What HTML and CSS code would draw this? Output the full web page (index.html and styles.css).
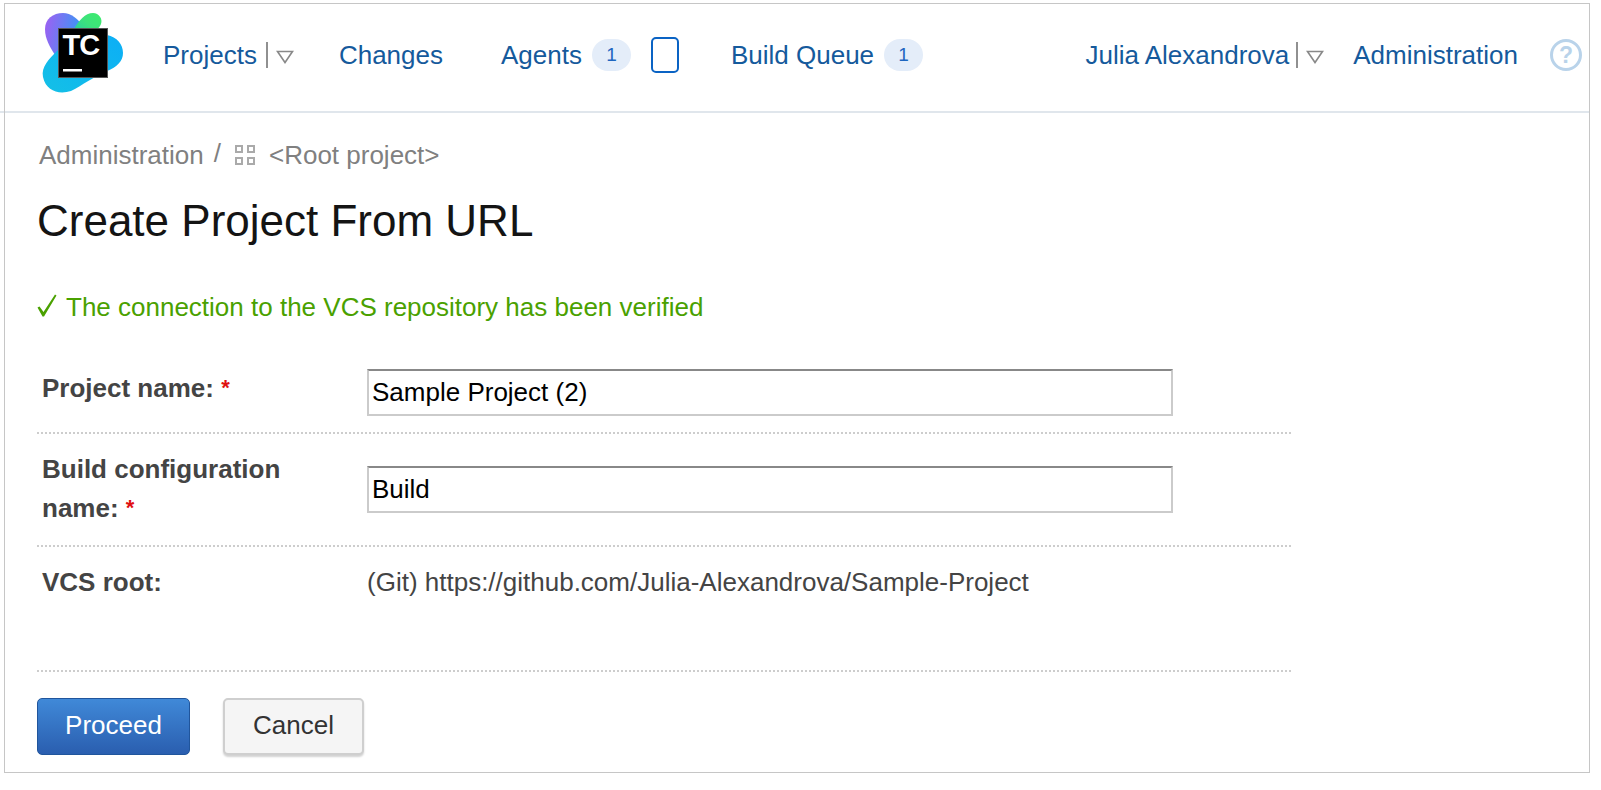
FILE: index.html
```html
<!DOCTYPE html>
<html lang="en">
<head>
<meta charset="utf-8">
<title>Create Project From URL</title>
<link rel="stylesheet" href="styles.css">
</head>
<body>
<div class="frame">
  <header class="topbar">
    <svg class="logo" viewBox="0 0 84 84" width="84" height="84" aria-hidden="true">
      <defs>
        <linearGradient id="gp" x1="0" y1="0.3" x2="1" y2="0.5"><stop offset="0" stop-color="#9a62f2"/><stop offset="1" stop-color="#2f9cf4"/></linearGradient>
        <linearGradient id="gg" x1="0" y1="1" x2="1" y2="0"><stop offset="0" stop-color="#1fc0b8"/><stop offset="0.6" stop-color="#3de27c"/><stop offset="1" stop-color="#3dec6c"/></linearGradient>
        <linearGradient id="gc" x1="0" y1="1" x2="1" y2="0"><stop offset="0" stop-color="#14c0e6"/><stop offset="1" stop-color="#0caef6"/></linearGradient>
      </defs>
      <path fill="url(#gp)" d="M4 18C4 8 12 2 22 2C30 2 37 8 43 16L30 40L14 44C9 36 4 28 4 18Z"/>
      <path fill="url(#gc)" d="M66 24C76 26 82 33 82 42C82 50 76 56 66 60C52 66 42 74 30 80C18 84 5 80 2 66C0 56 8 48 16 40C30 28 52 22 66 24Z"/>
      <path fill="url(#gg)" d="M34 16C38 10 44 2 52 2C58 2 62 8 60 13C58 18 54 20 50 24L30 30Z"/>
      <rect x="17.5" y="17.5" width="49" height="49" fill="#000" stroke="#555" stroke-width="1"/>
      <text class="logo-text" x="21.5" y="44">TC</text>
      <rect x="22" y="58" width="19" height="2.5" fill="#fff"/>
    </svg>
    <nav class="nav">
      <a class="nav-link nav-projects">Projects</a>
      <span class="pipe"></span>
      <svg class="caret" viewBox="0 0 18 14" width="18" height="14" aria-hidden="true"><path d="M1.5 1.5H16.5L9 12.5Z" fill="none" stroke="#888" stroke-width="1.6"/></svg>
      <a class="nav-link nav-changes">Changes</a>
      <a class="nav-link nav-agents">Agents</a>
      <span class="badge">1</span>
      <span class="box"></span>
      <a class="nav-link nav-queue">Build Queue</a>
      <span class="badge">1</span>
    </nav>
    <nav class="nav nav-right">
      <a class="nav-link">Julia Alexandrova</a>
      <span class="pipe pipe-user"></span>
      <svg class="caret" viewBox="0 0 18 14" width="18" height="14" aria-hidden="true"><path d="M1.5 1.5H16.5L9 12.5Z" fill="none" stroke="#888" stroke-width="1.6"/></svg>
      <a class="nav-link nav-admin">Administration</a>
      <span class="help">?</span>
    </nav>
  </header>
  <main class="content">
    <div class="crumbs">
      <span>Administration</span>
      <span class="slash">/</span>
      <svg class="grid-icon" viewBox="0 0 20 20" width="20" height="20" aria-hidden="true"><g fill="none" stroke="#aaa" stroke-width="2"><rect x="1" y="1" width="6" height="6"/><rect x="13" y="1" width="6" height="6"/><rect x="1" y="13" width="6" height="6"/><rect x="13" y="13" width="6" height="6"/></g></svg>
      <span>&lt;Root project&gt;</span>
    </div>
    <h1 class="title">Create Project From URL</h1>
    <p class="success"><svg class="check" viewBox="0 0 20 23" width="20" height="23" aria-hidden="true"><path d="M0.5 13.5L2.5 12.5L6.5 18L18 0.5L19.5 1.5L7 22.5H5.5Z" fill="#4aa100"/></svg><span>The connection to the VCS repository has been verified</span></p>
    <div class="form">
      <div class="row row-name">
        <div class="label">Project name: <span class="req">*</span></div>
        <div class="input">Sample Project (2)</div>
      </div>
      <div class="row row-build">
        <div class="label">Build configuration <span class="label-end">name: <span class="req">*</span></span></div>
        <div class="input">Build</div>
      </div>
      <div class="row row-vcs">
        <div class="label">VCS root:</div>
        <div class="value">(Git) https://github.com/Julia-Alexandrova/Sample-Project</div>
      </div>
    </div>
    <div class="actions">
      <button class="btn btn-primary">Proceed</button>
      <button class="btn btn-default">Cancel</button>
    </div>
  </main>
</div>
</body>
</html>
```
FILE: styles.css
```css
html, body { margin: 0; padding: 0; background: #fff; }
body { font-family: "Liberation Sans", Arial, sans-serif; font-size: 26px; color: #333; overflow: hidden; }
.frame { box-sizing: border-box; width: 1586px; height: 770px; margin: 3px 0 0 4px; border: 1px solid #c6c6c6; }

.topbar { position: relative; box-sizing: border-box; height: 109px; display: flex; align-items: center; padding: 0 7px 1px 36px; border-bottom: 2px solid #e0e6ec; }
.topbar::before { content: ""; position: absolute; left: -5px; bottom: -2px; width: 4px; height: 2px; background: #e0e6ec; }
.logo { flex: none; margin-right: 38px; margin-top: -9px; }
.logo-text { fill: #fff; font-family: "Liberation Sans", Arial, sans-serif; font-size: 29px; font-weight: bold; letter-spacing: -1px; }
.nav { display: flex; align-items: center; height: 40px; margin-top: -4px; }
.nav-right { margin-left: auto; }
.nav-link { color: #155a9c; white-space: nowrap; }
.pipe { width: 2px; height: 26px; background: #909090; margin: 0 8px 0 9px; }
.pipe-user { margin: 0 8px 0 7px; }
.caret { flex: none; margin-top: 3px; }
.nav-changes { margin-left: 45px; }
.nav-agents { margin-left: 58px; }
.nav-queue { margin-left: 52px; }
.badge { box-sizing: border-box; width: 39px; height: 32px; border-radius: 16px; background: #e4edf9; color: #1e66c0; font-size: 19px; line-height: 32px; text-align: center; margin-left: 10px; }
.box { box-sizing: border-box; width: 28px; height: 36px; border: 2px solid #0a63c4; border-radius: 5px; margin-left: 20px; }
.nav-admin { margin-left: 29px; }
.help { box-sizing: border-box; width: 32px; height: 32px; margin-left: 32px; border: 3px solid #b9d3ea; border-radius: 50%; color: #b9d3ea; font-size: 23px; font-weight: bold; line-height: 26px; text-align: center; }

.content { padding: 0 0 0 32px; }
.crumbs { display: flex; align-items: center; height: 40px; margin: 22px 0 0 2px; color: #808080; }
.slash { margin: 0 14px 0 10px; position: relative; top: -2px; }
.grid-icon { flex: none; margin-right: 14px; }
.title { font-size: 44px; font-weight: 400; line-height: 50px; color: #141414; margin: 21px 0 0; }
.success { display: flex; align-items: center; gap: 9px; margin: 45px 0 0; line-height: 32px; color: #4aa100; }
.check { flex: none; margin-top: -3px; }

.form { width: 1254px; margin-top: 37px; }
.row { box-sizing: border-box; display: grid; grid-template-columns: 325px 806px; padding-left: 5px; border-bottom: 2px dotted #cdcdcd; }
.row-name { height: 74px; padding-top: 9px; }
.row-build { height: 113px; padding-top: 16px; }
.row-build .input { margin-top: 16px; }
.row-vcs { height: 125px; padding-top: 16px; }
.label { font-weight: bold; color: #444; line-height: 39px; width: 270px; }
.label-end { white-space: nowrap; }
.req { color: #e01010; font-size: 22px; position: relative; top: -2px; }
.input { box-sizing: border-box; height: 47px; border: 2px solid #cbcbcb; border-top-color: #888; padding-left: 3px; line-height: 43px; color: #000; }
.value { line-height: 39px; color: #444; }

.actions { display: flex; gap: 33px; margin-top: 26px; }
.btn { box-sizing: border-box; height: 57px; border-radius: 5px; font: inherit; padding: 0 0 2px; }
.btn-primary { width: 153px; color: #fff; border: 1px solid #20559c; background: linear-gradient(#4089d8, #2a5eaf); }
.btn-default { width: 141px; color: #333; border: 2px solid #cfcfcf; background: #f5f5f5; box-shadow: 0 2px 2px rgba(0,0,0,.18); }
```
